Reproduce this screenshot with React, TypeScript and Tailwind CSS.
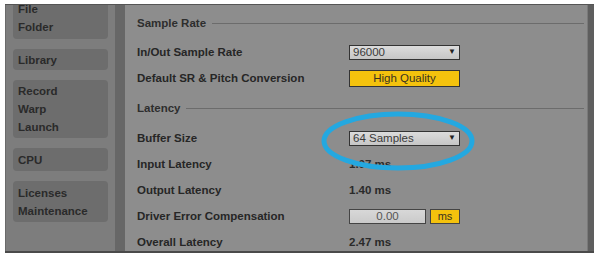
const navGroups = [
  { items: ['File', 'Folder'], h: 'h-[43px] -mt-[9px]' },
  { items: ['Library'], h: 'h-[21px]' },
  { items: ['Record', 'Warp', 'Launch'], h: 'h-[58px]' },
  { items: ['CPU'], h: 'h-[23px]' },
  { items: ['Licenses', 'Maintenance'], h: 'h-[41px]' },
];

function SectionHeader({ title }: { title: string }) {
  return (
    <div className="flex items-center h-[18px] pr-[3px]">
      <span className="text-[11.5px] font-bold text-[#2e2e2e]">{title}</span>
      <div className="flex-1 h-px bg-[#6c6c6c] ml-[6px]" />
    </div>
  );
}

function Row({ label, children }: { label: string; children?: React.ReactNode }) {
  return (
    <div className="flex items-center h-[26px]">
      <span className="w-[212px] text-[11.5px] font-bold text-[#262626]">{label}</span>
      <div className="flex items-center">{children}</div>
    </div>
  );
}

function Dropdown({ value }: { value: string }) {
  return (
    <div className="w-[111px] h-[15px] flex items-center justify-between px-[3px] border border-[#333] bg-gradient-to-b from-[#dcdcdc] to-[#c6c6c6]">
      <span className="text-[11.5px] leading-none text-[#3a3a3a]">{value}</span>
      <span className="text-[8px] leading-none text-[#222]">▼</span>
    </div>
  );
}

export default function App() {
  return (
    <div className="w-[599px] h-[254px] bg-white pt-[4px] px-[5px] font-['Liberation_Sans',Arial,sans-serif]">
      <div className="flex h-[249px] border-t border-[#555] border-b-2 border-b-[#4a4a4a] overflow-hidden">
        {/* sidebar */}
        <div className="w-[110px] bg-[#7d7d7d] px-[7px] flex flex-col gap-[10px] border-l border-[#6a6a6a]">
          {navGroups.map((g, i) => (
            <div key={i} className={`${g.h} rounded-[4px] bg-[#6d6d6d] flex flex-col justify-center pl-[5px]`}>
              {g.items.map(item => (
                <span key={item} className="h-[18px] leading-[18px] text-[11.5px] font-bold text-[#2a2a2a]">
                  {item}
                </span>
              ))}
            </div>
          ))}
        </div>
        <div className="w-[10px] bg-[#676767]" />

        {/* main */}
        <div className="relative flex-1 bg-[#8d8d8d] pl-[12px] pt-[10px] flex flex-col">
          <SectionHeader title="Sample Rate" />
          <div className="mt-[7px]">
            <Row label="In/Out Sample Rate">
              <Dropdown value="96000" />
            </Row>
            <Row label="Default SR & Pitch Conversion">
              <div className="w-[111px] h-[17px] flex items-center justify-center border border-[#333] bg-[#f4c20d] text-[11.5px] text-[#3a3320]">
                High Quality
              </div>
            </Row>
          </div>
          <div className="mt-[8px]">
            <SectionHeader title="Latency" />
          </div>
          <div className="mt-[8px]">
            <Row label="Buffer Size">
              <Dropdown value="64 Samples" />
            </Row>
            <Row label="Input Latency">
              <span className="text-[11.5px] font-bold text-[#2a2a2a]">1.07 ms</span>
            </Row>
            <Row label="Output Latency">
              <span className="text-[11.5px] font-bold text-[#2a2a2a]">1.40 ms</span>
            </Row>
            <Row label="Driver Error Compensation">
              <div className="w-[77px] h-[15px] flex items-center justify-center border border-[#444] bg-gradient-to-b from-[#d8d8d8] to-[#cacaca] text-[11.5px] text-[#555]">
                0.00
              </div>
              <div className="ml-[4px] w-[30px] h-[15px] flex items-center justify-center border border-[#444] bg-[#f4c20d] text-[11px] text-[#3a3320]">
                ms
              </div>
            </Row>
            <Row label="Overall Latency">
              <span className="text-[11.5px] font-bold text-[#2a2a2a]">2.47 ms</span>
            </Row>
          </div>

          {/* highlight ellipse drawn over the buffer size control */}
          <svg className="absolute left-[195px] top-[104px]" width="160" height="64" viewBox="0 0 160 64">
            <ellipse cx="78" cy="32" rx="74" ry="27" fill="none" stroke="#24a8e0" strokeWidth="5" />
          </svg>
        </div>
        <div className="w-[7px] bg-[#5e5e5e] border-l border-[#7a7a7a]" />
      </div>
    </div>
  );
}
